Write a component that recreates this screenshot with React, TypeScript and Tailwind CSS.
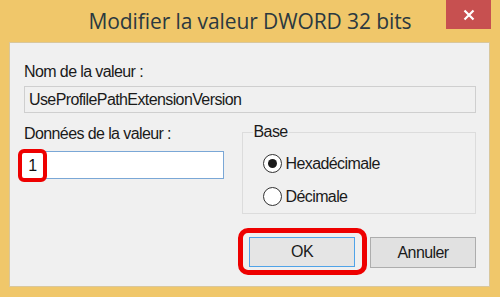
import React from "react";

const Radio = ({ checked, label }: { checked?: boolean; label: string }) => (
  <div className="flex items-center gap-[4px]">
    <span className="w-[19px] h-[19px] rounded-full border border-[#333333] bg-white flex items-center justify-center">
      {checked && <span className="w-[9px] h-[9px] rounded-full bg-[#1a1a1a]" />}
    </span>
    <span>{label}</span>
  </div>
);

const App = () => {
  return (
    <div className="w-[500px] h-[297px] bg-[#F0C76A] flex flex-col overflow-hidden">
      {/* Title bar */}
      <div className="relative h-[42px] shrink-0 flex items-center justify-center">
        <span className="text-[21px] text-[#2b3940] font-['Open_Sans',sans-serif] tracking-[-0.1px] pt-[2px]">
          Modifier la valeur DWORD 32 bits
        </span>
        <div className="absolute top-0 right-[9px] w-[45px] h-[29px] bg-[#C75050] flex items-center justify-center">
          <svg width="12" height="12" viewBox="0 0 12 12">
            <path d="M1.5 1.5 L10.5 10.5 M10.5 1.5 L1.5 10.5" stroke="white" strokeWidth="2.2" />
          </svg>
        </div>
      </div>

      {/* Dialog body */}
      <div className="mx-[9px] mr-[10px] mb-[10px] flex-1 bg-[#F0F0F0] border border-[#d9c79c] pl-[14px] pr-[13px] pt-[19px] font-['Liberation_Sans',sans-serif] text-[16px] text-[#1a1a1a] tracking-[-0.6px]">
        <div className="leading-[20px]">Nom de la valeur :</div>
        <div className="mt-[4px] h-[27px] border border-[#cfcfcf] bg-[#F0F0F0] flex items-center pl-[4px]">
          UseProfilePathExtensionVersion
        </div>

        <div className="flex mt-[14px]">
          <div className="w-[200px]">
            <div className="leading-[20px] mt-[-3px]">Données de la valeur :</div>
            <div className="relative mt-[7px] h-[28px] border border-[#7aa7d6] bg-white">
              <div className="absolute left-[-7px] top-[-3px] w-[29px] h-[33px] border-[4px] border-[#ee0000] rounded-[6px] bg-white flex items-center justify-center text-[#111]">
                1
              </div>
            </div>
          </div>

          <div className="relative ml-[18px] mt-[5px] w-[235px] h-[82px] border border-[#dcdcdc]">
            <span className="absolute left-[10px] top-[-11px] bg-[#F0F0F0] px-[1px] leading-[20px]">
              Base
            </span>
            <div className="pl-[20px] pt-[21px] flex flex-col gap-[14px] leading-[19px]">
              <Radio checked label="Hexadécimale" />
              <Radio label="Décimale" />
            </div>
          </div>
        </div>

        <div className="flex justify-end gap-[15px] mt-[23px]">
          <div className="relative">
            <div className="absolute left-[-11px] top-[-9px] w-[129px] h-[47px] border-[5px] border-[#ee0000] rounded-[10px]" />
            <div className="w-[106px] h-[30px] border border-[#4fa3e8] bg-[#E5E5E5] flex items-center justify-center">
              OK
            </div>
          </div>
          <div className="w-[106px] h-[31px] border border-[#adadad] bg-[#E1E1E1] flex items-center justify-center">
            Annuler
          </div>
        </div>
      </div>
    </div>
  );
};

export default App;
